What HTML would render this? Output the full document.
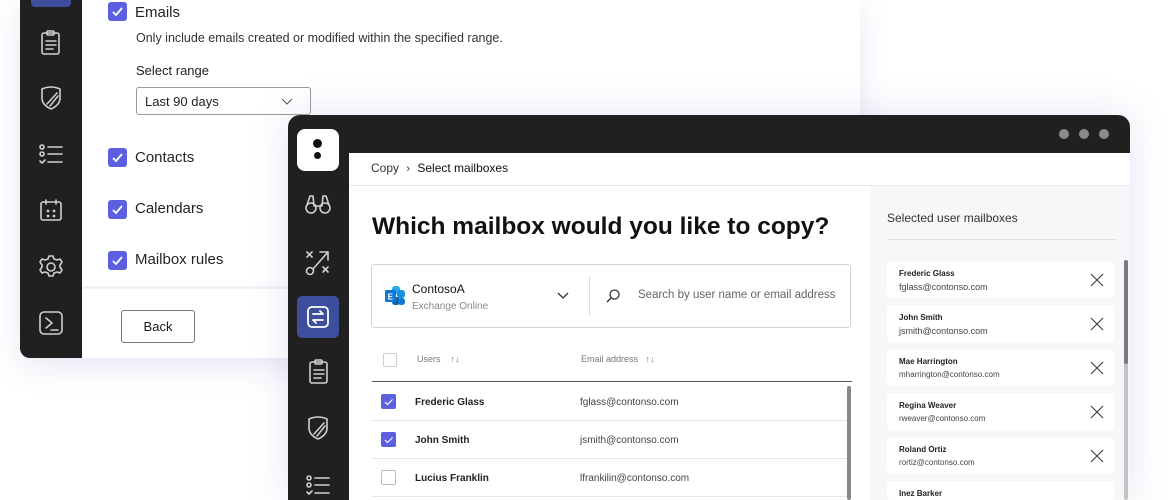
<!DOCTYPE html>
<html><head><meta charset="utf-8"><style>
*{box-sizing:border-box;margin:0;padding:0}
html,body{width:1170px;height:500px;overflow:hidden}
body{background:#fff;font-family:"Liberation Sans",sans-serif;color:#1b1b1b;position:relative}
.abs{position:absolute}
.cb{position:absolute;width:19px;height:19px;background:#5b5fe0;border-radius:3px}
.cb svg{position:absolute;left:3px;top:3px}
.ic{position:absolute;stroke:#cfcfcf;fill:none;stroke-width:1.6;stroke-linecap:round;stroke-linejoin:round}
.lbl{position:absolute;font-size:15px;color:#242424}
.row{position:absolute;left:372px;width:476px;height:38px;border-bottom:1px solid #e6e6e6;font-size:10px}
.card{position:absolute;left:887px;width:227px;height:37px;background:#fff;border-radius:3px}
.card b{position:absolute;left:12px;top:8px;font-size:8px;color:#222}
.card span{position:absolute;left:12px;top:21px;font-size:9px;color:#444}
.card svg{position:absolute;right:10px;top:12px}
</style></head><body>
<div class="abs" style="left:20px;top:0;width:840px;height:358px;box-shadow:0 8px 30px rgba(120,120,200,0.18);border-radius:0 0 10px 10px"></div>
<div class="abs" style="left:20px;top:0;width:62px;height:358px;background:#202020;border-radius:0 0 0 10px"></div>
<div class="abs" style="left:31px;top:-6px;width:40px;height:13px;background:#3d4f9c;border-radius:4px"></div>
<div class="abs" style="left:82px;top:0;width:778px;height:358px;background:#fff;border-radius:0 0 10px 0"></div>
<div class="abs" style="left:82px;top:286px;width:778px;height:3px;background:#f1f2f6"></div>
<svg class="ic" style="left:40px;top:30px" width="22" height="26"><rect x="2" y="3" width="17" height="21" rx="2"/><rect x="7" y="1" width="7" height="4" rx="1"/><path d="M6 11h10M6 15h10M6 19h7"/></svg>
<svg class="ic" style="left:40px;top:86px" width="22" height="24"><path d="M2 3q9-4 18 0v9q0 7-9 11q-9-4-9-11z"/><path d="M10 20l8-10M7 18l10-11"/></svg>
<svg class="ic" style="left:38px;top:143px" width="26" height="24"><circle cx="4" cy="4" r="2"/><circle cx="4" cy="11" r="2"/><path d="M2 18l2 2 3-3M10 4h14M10 11h14M10 19h14"/></svg>
<svg class="ic" style="left:39px;top:198px" width="24" height="24"><rect x="2" y="4" width="20" height="18" rx="2"/><path d="M7 2v4M17 2v4" /><circle cx="9" cy="13" r=".6"/><circle cx="15" cy="13" r=".6"/><circle cx="9" cy="18" r=".6"/><circle cx="15" cy="18" r=".6"/></svg>
<svg class="ic" style="left:38px;top:254px" width="26" height="26"><circle cx="13" cy="13" r="4"/><path d="M11 2h4l1 3 3 1 3-1 2 3-2 3v2l2 3-2 3-3-1-3 1-1 3h-4l-1-3-3-1-3 1-2-3 2-3v-2l-2-3 2-3 3 1 3-1z"/></svg>
<svg class="ic" style="left:38px;top:310px" width="26" height="26"><rect x="2" y="2" width="22" height="22" rx="4"/><path d="M8 8l6 5-6 5M13 20h7"/></svg>
<div class="cb" style="left:108px;top:2px"><svg width="13" height="13" viewBox="0 0 13 13"><path d="M2 7l3 3 6-7" stroke="#fff" stroke-width="1.8" fill="none"/></svg></div>
<div class="lbl" style="left:135px;top:4px">Emails</div>
<div class="abs" style="left:136px;top:31px;font-size:12.5px;color:#333">Only include emails created or modified within the specified range.</div>
<div class="abs" style="left:136px;top:63px;font-size:13px;color:#222">Select range</div>
<div class="abs" style="left:136px;top:87px;width:175px;height:28px;border:1px solid #9a9a9a;border-radius:3px;font-size:13px;padding:6px 8px;color:#222">Last 90 days<svg class="abs" style="left:144px;top:10px" width="12" height="8"><path d="M1 1l5 5 5-5" stroke="#555" fill="none"/></svg></div>
<div class="cb" style="left:108px;top:148px"><svg width="13" height="13" viewBox="0 0 13 13"><path d="M2 7l3 3 6-7" stroke="#fff" stroke-width="1.8" fill="none"/></svg></div>
<div class="lbl" style="left:135px;top:149px">Contacts</div>
<div class="cb" style="left:108px;top:200px"><svg width="13" height="13" viewBox="0 0 13 13"><path d="M2 7l3 3 6-7" stroke="#fff" stroke-width="1.8" fill="none"/></svg></div>
<div class="lbl" style="left:135px;top:200px">Calendars</div>
<div class="cb" style="left:108px;top:251px"><svg width="13" height="13" viewBox="0 0 13 13"><path d="M2 7l3 3 6-7" stroke="#fff" stroke-width="1.8" fill="none"/></svg></div>
<div class="lbl" style="left:135px;top:251px">Mailbox rules</div>
<div class="abs" style="left:121px;top:310px;width:74px;height:33px;border:1px solid #777;border-radius:3px;font-size:13px;text-align:center;line-height:31px">Back</div>

<div class="abs" style="left:288px;top:115px;width:842px;height:385px;background:#202020;border-radius:12px 12px 0 0;box-shadow:0 0 40px rgba(120,120,200,0.2)"></div>
<div class="abs" style="left:1059px;top:129px;width:10px;height:10px;border-radius:50%;background:#8a8a8a"></div>
<div class="abs" style="left:1079px;top:129px;width:10px;height:10px;border-radius:50%;background:#8a8a8a"></div>
<div class="abs" style="left:1099px;top:129px;width:10px;height:10px;border-radius:50%;background:#8a8a8a"></div>
<div class="abs" style="left:349px;top:153px;width:781px;height:347px;background:#fff"></div>
<div class="abs" style="left:349px;top:185px;width:781px;height:1px;background:#e8e8e8"></div>
<div class="abs" style="left:870px;top:186px;width:260px;height:314px;background:#f6f7f9"></div>
<div class="abs" style="left:297px;top:129px;width:42px;height:42px;background:#fff;border-radius:8px"></div>
<div class="abs" style="left:313px;top:139px;width:9px;height:9px;border-radius:50%;background:#111"></div>
<div class="abs" style="left:314px;top:152px;width:7px;height:7px;border-radius:50%;background:#111"></div>
<svg class="ic" style="left:304px;top:192px" width="28" height="24"><circle cx="7" cy="16" r="5"/><circle cx="21" cy="16" r="5"/><path d="M3 13l3-9h3l1 10M25 13l-3-9h-3l-1 10M11 14h6"/></svg>
<svg class="ic" style="left:305px;top:249px" width="26" height="28"><path d="M2 3l5 5M7 3l-5 5M18 18l5 5M23 18l-5 5M8 20l15-17M15 3h8v8"/><circle cx="5" cy="22" r="3.5"/></svg>
<div class="abs" style="left:297px;top:296px;width:42px;height:42px;background:#3d4f9c;border-radius:5px"></div>
<svg class="abs" style="left:306px;top:305px" width="24" height="24" fill="none" stroke="#fff" stroke-width="1.8" stroke-linecap="round" stroke-linejoin="round"><rect x="2" y="2" width="20" height="20" rx="4"/><path d="M7 9h10l-3-3M17 15H7l3 3"/></svg>
<svg class="ic" style="left:308px;top:359px" width="22" height="26"><rect x="2" y="3" width="17" height="21" rx="2"/><rect x="7" y="1" width="7" height="4" rx="1"/><path d="M6 11h10M6 15h10M6 19h7"/></svg>
<svg class="ic" style="left:307px;top:416px" width="22" height="24"><path d="M2 3q9-4 18 0v9q0 7-9 11q-9-4-9-11z"/><path d="M10 20l8-10M7 18l10-11"/></svg>
<svg class="ic" style="left:305px;top:474px" width="26" height="24"><circle cx="4" cy="4" r="2"/><circle cx="4" cy="11" r="2"/><path d="M2 18l2 2 3-3M10 4h14M10 11h14M10 19h14"/></svg>
<div class="abs" style="left:371px;top:161px;font-size:12px;color:#333">Copy <span style="margin:0 4px;font-size:11px">›</span> <span style="color:#111">Select mailboxes</span></div>
<div class="abs" style="left:372px;top:213px;font-size:24.5px;font-weight:bold;color:#111">Which mailbox would you like to copy?</div>
<div class="abs" style="left:371px;top:264px;width:480px;height:64px;border:1px solid #d4d4d4;border-radius:3px"></div>
<svg class="abs" style="left:384px;top:285px" width="22" height="22"><rect x="8" y="1" width="8" height="8" rx="3" fill="#28a8ea"/><rect x="13" y="5" width="8" height="8" rx="3" fill="#1490df"/><rect x="8" y="12" width="8" height="8" rx="3" fill="#0a64ad"/><rect x="14" y="13" width="7" height="7" rx="3" fill="#0f78d4"/><rect x="1" y="5" width="11" height="12" rx="1.5" fill="#0f78d4"/><text x="3.6" y="14.5" font-size="8" font-weight="bold" fill="#fff" font-family="Liberation Sans">E</text></svg>
<div class="abs" style="left:412px;top:282px;font-size:12px;color:#111">ContosoA</div>
<div class="abs" style="left:412px;top:301px;font-size:10px;color:#888">Exchange Online</div>
<svg class="abs" style="left:557px;top:292px" width="12" height="8"><path d="M1 1l5 5 5-5" stroke="#333" stroke-width="1.3" fill="none"/></svg>
<div class="abs" style="left:589px;top:276px;width:1px;height:40px;background:#ddd"></div>
<svg class="abs" style="left:605px;top:288px" width="16" height="16" fill="none" stroke="#333" stroke-width="1.3"><circle cx="9.5" cy="6.5" r="4.5"/><path d="M6 10l-4 4"/></svg>
<div class="abs" style="left:638px;top:289px;font-size:11.5px;color:#666">Search by user name or email address</div>
<div class="abs" style="left:383px;top:353px;width:14px;height:14px;border:1px solid #ccc;border-radius:2px"></div>
<div class="abs" style="left:417px;top:354px;font-size:9px;color:#777">Users &nbsp;&nbsp;&nbsp;↑↓</div>
<div class="abs" style="left:581px;top:354px;font-size:9px;color:#777">Email address &nbsp;&nbsp;↑↓</div>
<div class="abs" style="left:372px;top:381px;width:480px;height:1px;background:#555"></div>
<div class="row" style="top:383px"></div>
<div class="row" style="top:421px"></div>
<div class="row" style="top:459px"></div>
<div class="abs" style="left:381px;top:394px;width:15px;height:15px;background:#5b5fe0;border-radius:2px"><svg width="15" height="15"><path d="M4 8l2.5 2.5 5-5" stroke="#fff" stroke-width="1.2" fill="none"/></svg></div>
<div class="abs" style="left:381px;top:432px;width:15px;height:15px;background:#5b5fe0;border-radius:2px"><svg width="15" height="15"><path d="M4 8l2.5 2.5 5-5" stroke="#fff" stroke-width="1.2" fill="none"/></svg></div>
<div class="abs" style="left:381px;top:470px;width:15px;height:15px;border:1px solid #bbb;border-radius:2px"></div>
<div class="abs" style="left:415px;top:397px;font-size:10px;font-weight:bold;color:#222">Frederic Glass</div>
<div class="abs" style="left:580px;top:397px;font-size:10px;color:#444">fglass@contonso.com</div>
<div class="abs" style="left:415px;top:435px;font-size:10px;font-weight:bold;color:#222">John Smith</div>
<div class="abs" style="left:580px;top:435px;font-size:10px;color:#444">jsmith@contonso.com</div>
<div class="abs" style="left:415px;top:473px;font-size:10px;font-weight:bold;color:#222">Lucius Franklin</div>
<div class="abs" style="left:580px;top:473px;font-size:10px;color:#444">lfrankilin@contonso.com</div>
<div class="abs" style="left:847px;top:386px;width:4px;height:114px;background:#888;border-radius:2px"></div>
<div class="abs" style="left:887px;top:211px;font-size:12px;color:#333">Selected user mailboxes</div>
<div class="abs" style="left:887px;top:239px;width:229px;height:1px;background:#e2e2e2"></div>
<div class="abs" style="left:1124px;top:260px;width:4px;height:240px;background:#c4c4c4;border-radius:2px"></div>
<div class="abs" style="left:1124px;top:260px;width:4px;height:104px;background:#7a7a7a;border-radius:2px"></div>
<div class="card" style="top:261px"><b>Frederic Glass</b><span>fglass@contonso.com</span><svg width="14" height="14"><path d="M1 1l12 12M13 1L1 13" stroke="#444" stroke-width="1.2"/></svg></div>
<div class="card" style="top:305px"><b>John Smith</b><span>jsmith@contonso.com</span><svg width="14" height="14"><path d="M1 1l12 12M13 1L1 13" stroke="#444" stroke-width="1.2"/></svg></div>
<div class="card" style="top:349px"><b>Mae Harrington</b><span style="font-size:8px">mharrington@contonso.com</span><svg width="14" height="14"><path d="M1 1l12 12M13 1L1 13" stroke="#444" stroke-width="1.2"/></svg></div>
<div class="card" style="top:393px"><b>Regina Weaver</b><span style="font-size:8px">rweaver@contonso.com</span><svg width="14" height="14"><path d="M1 1l12 12M13 1L1 13" stroke="#444" stroke-width="1.2"/></svg></div>
<div class="card" style="top:437px"><b>Roland Ortiz</b><span style="font-size:8px">rortiz@contonso.com</span><svg width="14" height="14"><path d="M1 1l12 12M13 1L1 13" stroke="#444" stroke-width="1.2"/></svg></div>
<div class="card" style="top:481px;height:19px"><b>Inez Barker</b></div>
</body></html>
